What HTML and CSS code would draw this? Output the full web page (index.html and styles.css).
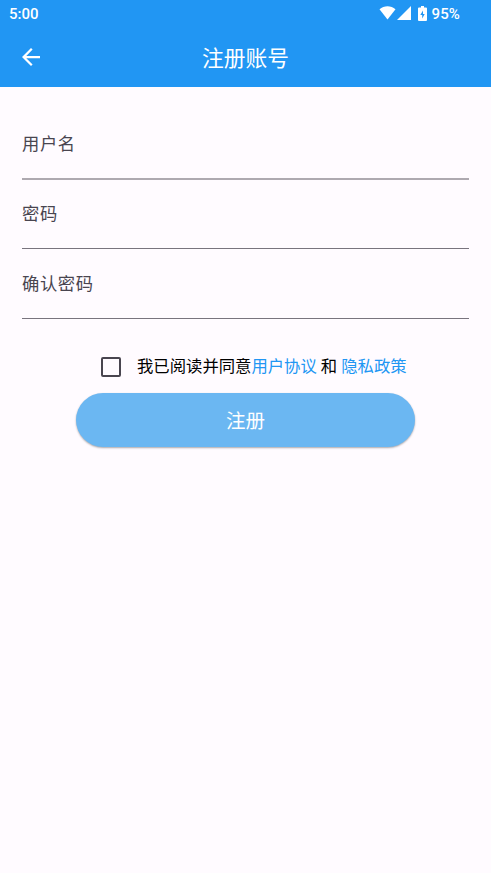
FILE: index.html
```html
<!DOCTYPE html>
<html lang="zh-CN">
<head>
<meta charset="utf-8">
<title>注册账号</title>
<link rel="stylesheet" href="styles.css">
</head>
<body>
<header class="top">
  <div class="status">
    <span class="time">5:00</span>
    <svg class="wifi" width="17" height="14" viewBox="0 0 17 14"><path d="M.5 3.200C5-.8 12-.8 16.500 3.200L8.500 13.600z"/></svg>
    <svg class="signal" width="14" height="14" viewBox="0 0 14 14"><path d="M0 14L14 0V14z"/></svg>
    <svg class="battery" width="9" height="15" viewBox="0 0 9 15"><path fill-rule="evenodd" d="M3 0h3v1.500h2q1 0 1 1V14q0 1-1 1H1q-1 0-1-1V2.500q0-1 1-1h2zM5 4.500L2.300 9h1.900v3.500L6.700 8H5z"/></svg>
    <span class="percent">95%</span>
  </div>
  <div class="bar">
    <svg class="back" width="18" height="18" viewBox="4 4 16 16"><path d="M20 11H7.830l5.590-5.590L12 4l-8 8 8 8 1.410-1.410L7.830 13H20v-2z"/></svg>
    <h1>注册账号</h1>
  </div>
</header>
<main>
  <div class="field first">用户名</div>
  <div class="field">密码</div>
  <div class="field">确认密码</div>
  <div class="agree"><span class="box"></span><span class="terms">我已阅读并同意<a>用户协议</a> 和 <a>隐私政策</a></span></div>
  <button class="submit">注册</button>
</main>
</body>
</html>
```
FILE: styles.css
```css
* { box-sizing: border-box; }
body { margin: 0; min-height: 873px; background: #fffbff; font-family: Roboto, "Noto Sans CJK SC", sans-serif; }
.top { height: 87px; background: #2196f3; color: #fff; }
.top svg { fill: #fff; flex: none; }
.status { height: 27px; display: flex; align-items: center; padding: 0 31px 0 9px; font-size: 15px; font-weight: 500; }
.time { margin-right: auto; }
.percent { letter-spacing: .1px; }
.wifi, .signal { margin-top: -1px; }
.signal { margin-left: 1px; }
.battery { margin: -1px 5px 0 7px; }
.bar { height: 60px; display: grid; grid-template-columns: 22px 1fr 22px; align-items: center; }
.back { grid-column: 1; margin-left: 21.500px; }
h1 { margin: 0; padding-bottom: 2px; text-align: center; font-size: 21.750px; font-weight: 400; }
main { padding: 40px 22px 0; display: flex; flex-direction: column; }
.field { height: 52px; margin-bottom: 18px; border-bottom: 1px solid #79747e; color: #49454f; font-size: 17.300px; letter-spacing: .6px; line-height: 35px; }
.first { height: 53px; margin-bottom: 17px; border-bottom: 2px solid #aea9b0; }
.agree { display: flex; align-items: center; height: 38px; margin: 10px 0 8px 78.500px; font-size: 16.350px; color: #000; }
.box { width: 20px; height: 20px; margin: 1px 16.500px 0 0; border: 2px solid #49454f; border-radius: 2px; }
.terms { white-space: nowrap; padding-bottom: 3px; }
.terms a { color: #2196f3; }
.submit { align-self: center; width: 339px; height: 54px; padding: 0 0 1px; border: 0; border-radius: 27px; background: #6bb7f2; color: #fff; font: inherit; font-size: 19.500px; box-shadow: 0 1px 2px #0005; }
```
